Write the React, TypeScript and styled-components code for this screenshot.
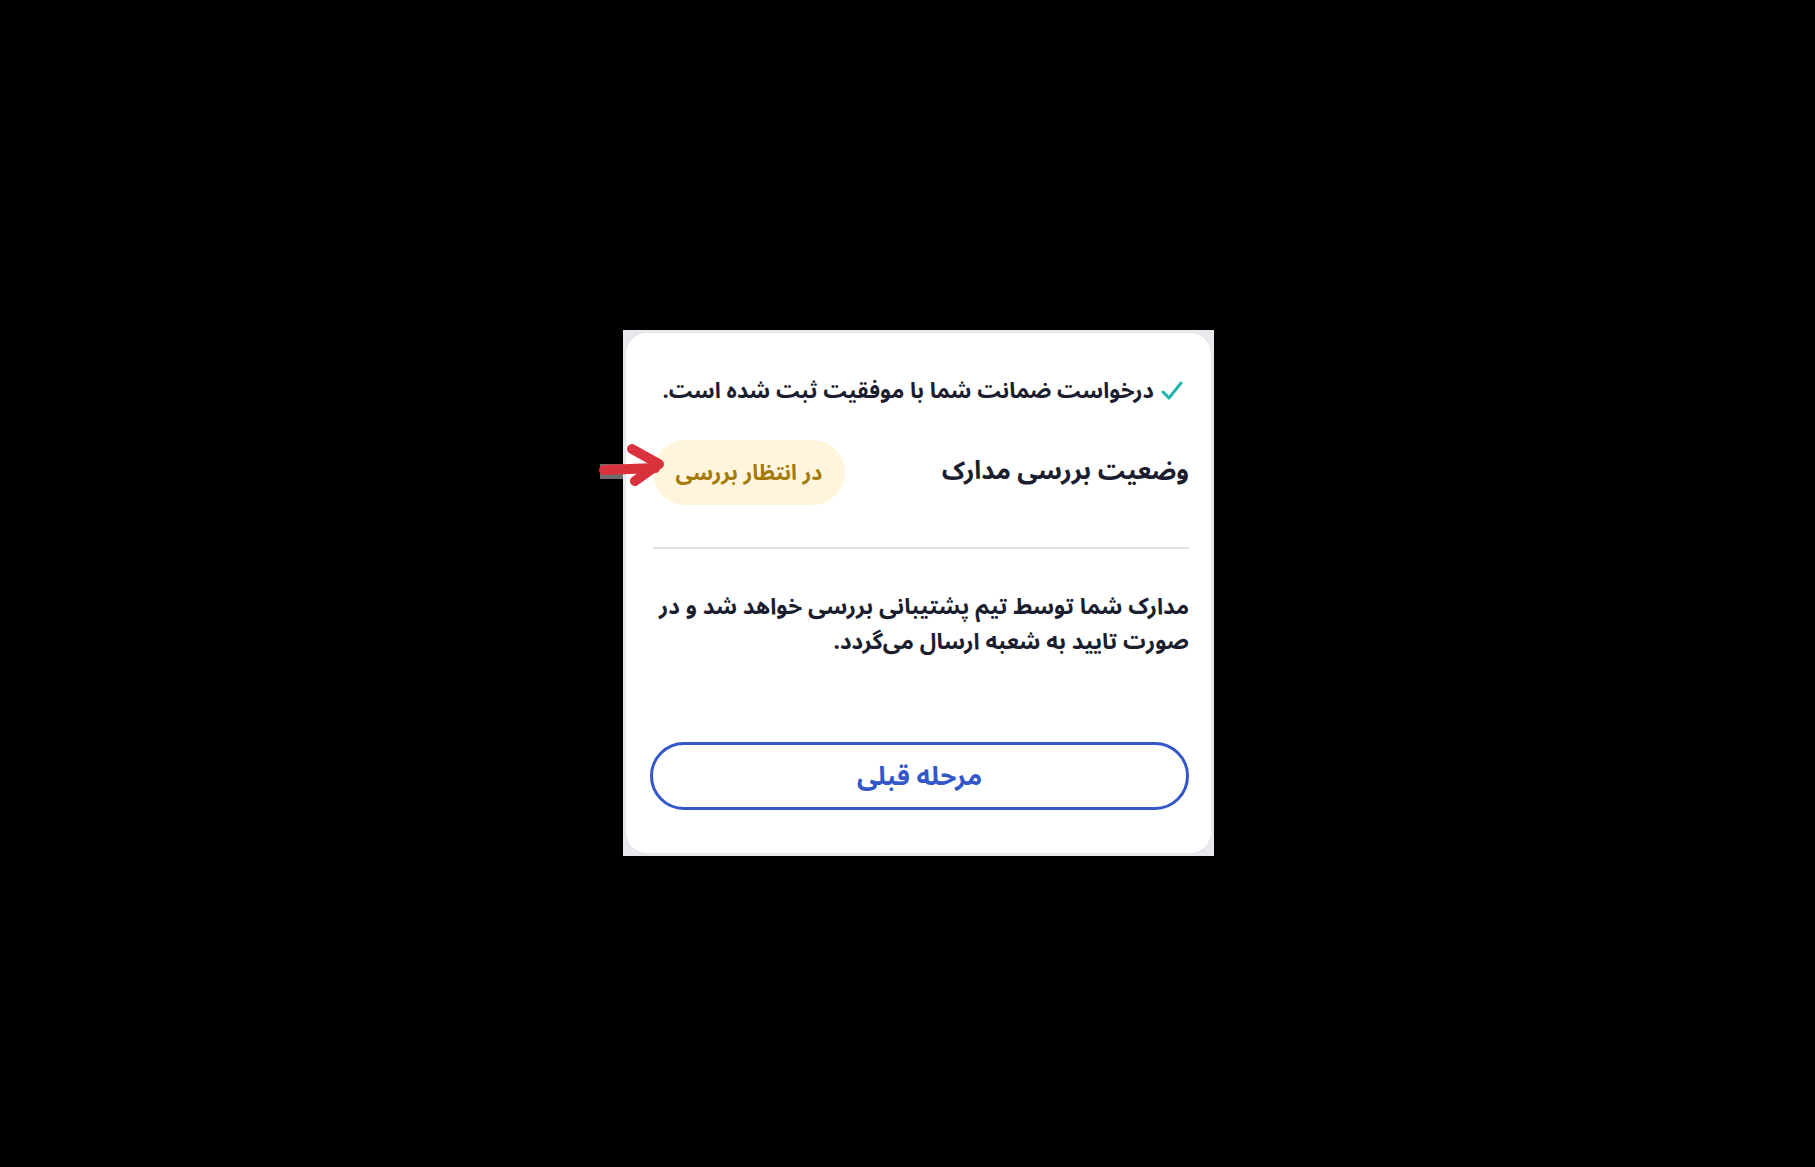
import React from "react";
import styled, { createGlobalStyle } from "styled-components";

const Global = createGlobalStyle`
  html, body { margin: 0; padding: 0; background: #000; }
  body { font-family: "Noto Sans Arabic", "Vazirmatn", "DejaVu Sans", sans-serif; }
  * { box-sizing: border-box; }
`;

const Stage = styled.div`
  width: 1815px;
  height: 1167px;
  background: #000;
  padding: 330px 0 0 623px;
`;

const Frame = styled.div`
  position: relative;
  width: 591px;
  height: 526px;
  padding: 2px;
  background: #e7e9ed;
`;

const Card = styled.div`
  width: 100%;
  height: 100%;
  background: #fff;
  border: 1px solid #e3e6eb;
  border-radius: 22px;
  padding: 41px 22px 43px 24px;
  display: flex;
  flex-direction: column;
  color: #1b1e2e;
`;

const SuccessRow = styled.div`
  display: flex;
  align-items: center;
  gap: 6px;
  height: 34px;
  font-size: 22px;
  font-weight: 700;
  line-height: 34px;
  padding-right: 5px;
`;

const StatusRow = styled.div`
  margin-top: 32px;
  display: flex;
  align-items: center;
  justify-content: space-between;
  height: 65px;
`;

const Title = styled.div`
  font-size: 25.5px;
  font-weight: 700;
  line-height: 34px;
  margin-top: -3px;
`;

const Badge = styled.div`
  height: 65px;
  width: 192px;
  margin-left: 3px;
  border-radius: 33px;
  background: #fff5dc;
  color: #a47a0c;
  font-size: 21.5px;
  font-weight: 700;
  display: flex;
  align-items: center;
  justify-content: center;
`;

const Divider = styled.hr`
  margin: 42px 0 0 3px;
  border: none;
  height: 2px;
  background: #dee2e9;
`;

const Paragraph = styled.p`
  margin: 41px 0 0 0;
  font-size: 22.5px;
  font-weight: 700;
  line-height: 35px;
`;

const BackButton = styled.button`
  margin-top: auto;
  height: 68px;
  width: 100%;
  border: 3px solid #3357c9;
  border-radius: 34px;
  background: #fff;
  color: #3357c9;
  font-family: inherit;
  font-size: 26px;
  font-weight: 700;
  cursor: pointer;
`;

const ArrowMark = styled.svg`
  position: absolute;
  left: -23px;
  top: 114px;
  overflow: visible;
`;

const CheckIcon = () => (
  <svg width="24" height="22" viewBox="0 0 24 22" fill="none">
    <path d="M3 12 L9 18 L21 3" stroke="#20b6ae" strokeWidth="3" strokeLinecap="round" strokeLinejoin="round" />
  </svg>
);

export default function App() {
  return (
    <>
      <Global />
      <Stage>
        <Frame>
          <Card dir="rtl">
            <SuccessRow>
              <CheckIcon />
              <span>درخواست ضمانت شما با موفقیت ثبت شده است.</span>
            </SuccessRow>
            <StatusRow>
              <Title>وضعیت بررسی مدارک</Title>
              <Badge>در انتظار بررسی</Badge>
            </StatusRow>
            <Divider />
            <Paragraph>
              مدارک شما توسط تیم پشتیبانی بررسی خواهد شد و در صورت تایید به شعبه ارسال می‌گردد.
            </Paragraph>
            <BackButton>مرحله قبلی</BackButton>
          </Card>
          <ArrowMark width="66" height="42" viewBox="0 0 66 42">
            <rect x="0" y="20" width="23" height="15" fill="#6d6d6d" />
            <path d="M4 26 L55 24" stroke="#d9323d" strokeWidth="10" strokeLinecap="round" />
            <path d="M32 5 L59 20 L35 37" stroke="#d9323d" strokeWidth="10" strokeLinecap="round" strokeLinejoin="round" fill="none" />
          </ArrowMark>
        </Frame>
      </Stage>
    </>
  );
}
